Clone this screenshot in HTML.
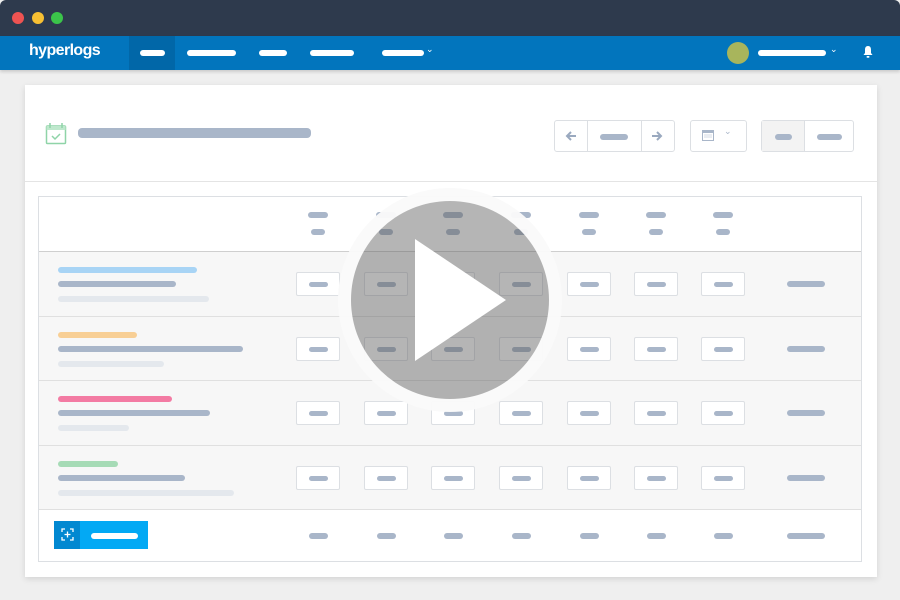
<!DOCTYPE html>
<html><head><meta charset="utf-8"><style>
*{margin:0;padding:0;box-sizing:border-box}
body{width:900px;height:600px;background:#efefef;position:relative;overflow:hidden;font-family:"Liberation Sans",sans-serif}
.a{position:absolute}
.bar{position:absolute;height:6px;border-radius:3px;background:#a9b6c9}
.cell{position:absolute;width:44px;height:24px;background:#fff;border:1px solid #dcdfe3;border-radius:2px}
.cell i{position:absolute;left:12px;top:9px;width:19px;height:5px;border-radius:3px;background:#a9b6c9}
</style></head><body>
<div class="a" style="left:0;top:0;width:900px;height:36px;background:#2e3a4d;border-radius:6px 6px 0 0"></div>
<div class="a" style="left:12px;top:12px;width:12px;height:12px;border-radius:50%;background:#ee5352"></div>
<div class="a" style="left:32px;top:12px;width:12px;height:12px;border-radius:50%;background:#f8c033"></div>
<div class="a" style="left:51px;top:12px;width:12px;height:12px;border-radius:50%;background:#3bc44a"></div>
<div class="a" style="left:0;top:36px;width:900px;height:34px;background:#0275bd;box-shadow:0 2px 3px rgba(0,0,0,.15)"></div>
<div class="a" style="left:29px;top:42px;color:#fff;font-size:16px;font-weight:bold;letter-spacing:-0.6px">hyperlogs</div>
<div class="a" style="left:129px;top:36px;width:46px;height:34px;background:#0167a8"></div>
<div class="bar" style="left:140px;top:50px;width:25px;background:#fff"></div>
<div class="bar" style="left:187px;top:50px;width:49px;background:#fff"></div>
<div class="bar" style="left:259px;top:50px;width:28px;background:#fff"></div>
<div class="bar" style="left:310px;top:50px;width:44px;background:#fff"></div>
<div class="bar" style="left:382px;top:50px;width:42px;background:#fff"></div>
<div class="a" style="left:426px;top:44px;color:#fff;font-size:9px">⌄</div>
<div class="a" style="left:727px;top:42px;width:22px;height:22px;border-radius:50%;background:#a8b55c"></div>
<div class="bar" style="left:758px;top:50px;width:68px;background:#fff"></div>
<div class="a" style="left:830px;top:44px;color:#fff;font-size:9px">⌄</div>
<svg class="a" style="left:862px;top:45px" width="12" height="14" viewBox="0 0 12 14"><path d="M6 1C3.5 1 3 3 3 5v3L1.5 10h9L9 8V5c0-2-.5-4-3-4z" fill="#fff"/><rect x="4.5" y="11" width="3" height="1.8" rx=".9" fill="#fff"/></svg>

<div class="a" style="left:25px;top:85px;width:852px;height:492px;background:#fff;box-shadow:0 2px 6px rgba(0,0,0,.12)"></div>
<div class="a" style="left:25px;top:181px;width:852px;height:1px;background:#e4e4e4"></div>
<svg class="a" style="left:45px;top:122px" width="22" height="23" viewBox="0 0 22 23"><rect x="1.5" y="4" width="19" height="17.5" rx="1" fill="none" stroke="#8fd4a8" stroke-width="1.5"/><rect x="1.5" y="4" width="19" height="4" fill="#bfe8cd"/><path d="M5 1v5M17 1v5" stroke="#8fd4a8" stroke-width="1.5"/><path d="M7 14l3 3 5-5" fill="none" stroke="#8fd4a8" stroke-width="1.5"/></svg>
<div class="bar" style="left:78px;top:128px;width:233px;height:10px;border-radius:4px"></div>

<div class="a" style="left:554px;top:120px;width:121px;height:32px;border:1px solid #dcdfe3;border-radius:3px"></div>
<div class="a" style="left:587px;top:120px;width:1px;height:32px;background:#dcdfe3"></div>
<div class="a" style="left:641px;top:120px;width:1px;height:32px;background:#dcdfe3"></div>
<svg class="a" style="left:565px;top:130px" width="12" height="12" viewBox="0 0 12 12"><path d="M11 6H2M6 2L2 6l4 4" fill="none" stroke="#9aa9bf" stroke-width="2"/></svg>
<div class="bar" style="left:600px;top:134px;width:28px"></div>
<svg class="a" style="left:651px;top:130px" width="12" height="12" viewBox="0 0 12 12"><path d="M1 6h9M6 2l4 4-4 4" fill="none" stroke="#9aa9bf" stroke-width="2"/></svg>
<div class="a" style="left:690px;top:120px;width:57px;height:32px;border:1px solid #dcdfe3;border-radius:3px"></div>
<svg class="a" style="left:702px;top:129px" width="12" height="12" viewBox="0 0 12 12"><rect x="0.5" y="1.5" width="11" height="10" fill="none" stroke="#a9b6c9"/><rect x="0.5" y="1.5" width="11" height="2.5" fill="#a9b6c9"/><path d="M3 5.5v4M5 5.5v4M7 5.5v4M9 5.5v4" stroke="#a9b6c9" stroke-dasharray="1 1"/></svg>
<div class="a" style="left:724px;top:126px;color:#a9b6c9;font-size:9px">⌄</div>
<div class="a" style="left:761px;top:120px;width:93px;height:32px;border:1px solid #dcdfe3;border-radius:3px;background:#fff"></div>
<div class="a" style="left:762px;top:121px;width:43px;height:30px;background:#f3f3f3"></div>
<div class="a" style="left:804px;top:120px;width:1px;height:32px;background:#dcdfe3"></div>
<div class="bar" style="left:775px;top:134px;width:17px"></div>
<div class="bar" style="left:817px;top:134px;width:25px"></div>

<div class="a" style="left:38px;top:196px;width:824px;height:366px;border:1px solid #dcdfe3;background:#fff"></div>
<div class="a" style="left:39px;top:251px;width:822px;height:258px;background:#f7f7f7"></div>
<div id="t"></div>

<div class="a" style="left:54px;top:521px;width:94px;height:28px;background:#03a9f4"></div>
<div class="a" style="left:54px;top:521px;width:26px;height:28px;background:#0288d1"></div>
<svg class="a" style="left:61px;top:528px" width="13" height="13" viewBox="0 0 13 13"><path d="M1 4V1h3M9 1h3v3M12 9v3H9M4 12H1V9" fill="none" stroke="#fff" stroke-width="1.3"/><path d="M6.5 3.5v6M3.5 6.5h6" stroke="#fff" stroke-width="1.3"/></svg>
<div class="bar" style="left:91px;top:533px;width:47px;background:#fff"></div>

<div class="a" style="left:338px;top:188px;width:224px;height:224px;border-radius:50%;border:13px solid rgba(255,255,255,.93);background:rgba(90,90,90,.45)"></div>
<svg class="a" style="left:0;top:0" width="900" height="600"><polygon points="415,239 415,361 506,300" fill="#fff"/></svg>

<script>
var t=document.getElementById('t'),h='';
var cols=[318,386,453,521,589,656,723];
function bar(x,y,w,c){h+='<div class="bar" style="left:'+x+'px;top:'+y+'px;width:'+w+'px'+(c?';background:'+c:'')+'"></div>';}
cols.forEach(function(c){bar(c-10,212,20);bar(c-7,229,14);bar(c-9,533,19);});
bar(787,533,38);
[316,380,445].forEach(function(y){h+='<div class="a" style="left:39px;top:'+y+'px;width:822px;height:1px;background:#e0e0e0"></div>';});
h+='<div class="a" style="left:39px;top:251px;width:822px;height:1px;background:#cfcfcf"></div>';
h+='<div class="a" style="left:39px;top:509px;width:822px;height:1px;background:#e0e0e0"></div>';
var rows=[[284,'#a8d4f5',139,118,151],[349,'#f8cf95',79,185,106],[413,'#f37ba3',114,152,71],[478,'#a6dbb6',60,127,176]];
rows.forEach(function(r){var y=r[0];
bar(58,y-17,r[2],r[1]);bar(58,y-3,r[3]);bar(58,y+12,r[4],'#e4e8ed');
cols.forEach(function(c){h+='<div class="cell" style="left:'+(c-22)+'px;top:'+(y-12)+'px"><i></i></div>';});
bar(787,y-3,38);});
t.innerHTML=h;
</script>
</body></html>
